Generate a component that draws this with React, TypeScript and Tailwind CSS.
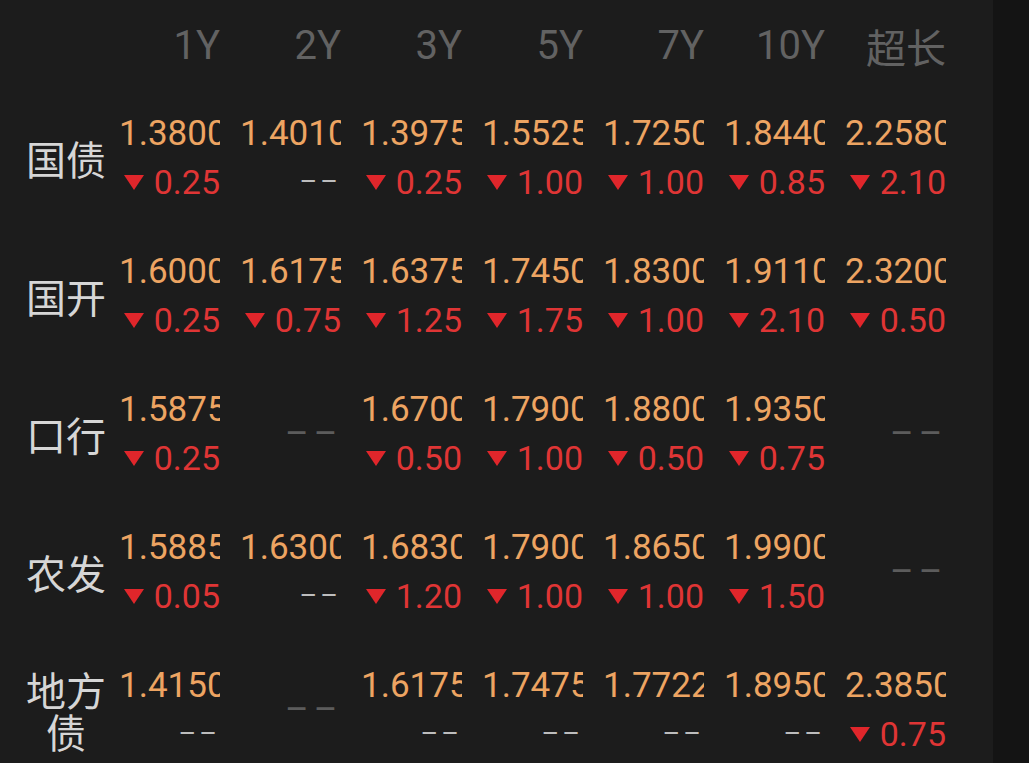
import React from 'react';

type Cell = { v: string; c: string | null } | null;

interface Row {
  name: string;
  cells: Cell[];
}

const HEAD = ['1Y', '2Y', '3Y', '5Y', '7Y', '10Y', '超长'];

const ROWS: Row[] = [
  {
    name: '国债',
    cells: [
      { v: '1.3800', c: '0.25' },
      { v: '1.4010', c: null },
      { v: '1.3975', c: '0.25' },
      { v: '1.5525', c: '1.00' },
      { v: '1.7250', c: '1.00' },
      { v: '1.8440', c: '0.85' },
      { v: '2.2580', c: '2.10' },
    ],
  },
  {
    name: '国开',
    cells: [
      { v: '1.6000', c: '0.25' },
      { v: '1.6175', c: '0.75' },
      { v: '1.6375', c: '1.25' },
      { v: '1.7450', c: '1.75' },
      { v: '1.8300', c: '1.00' },
      { v: '1.9110', c: '2.10' },
      { v: '2.3200', c: '0.50' },
    ],
  },
  {
    name: '口行',
    cells: [
      { v: '1.5875', c: '0.25' },
      null,
      { v: '1.6700', c: '0.50' },
      { v: '1.7900', c: '1.00' },
      { v: '1.8800', c: '0.50' },
      { v: '1.9350', c: '0.75' },
      null,
    ],
  },
  {
    name: '农发',
    cells: [
      { v: '1.5885', c: '0.05' },
      { v: '1.6300', c: null },
      { v: '1.6830', c: '1.20' },
      { v: '1.7900', c: '1.00' },
      { v: '1.8650', c: '1.00' },
      { v: '1.9900', c: '1.50' },
      null,
    ],
  },
  {
    name: '地方债',
    cells: [
      { v: '1.4150', c: null },
      null,
      { v: '1.6175', c: null },
      { v: '1.7475', c: null },
      { v: '1.7722', c: null },
      { v: '1.8950', c: null },
      { v: '2.3850', c: '0.75' },
    ],
  },
];

const num = { fontFamily: 'Roboto, "Noto Sans", sans-serif' };
const cjk = { fontFamily: '"Noto Sans CJK SC", "Noto Sans", sans-serif' };

function Down() {
  return (
    <svg width="20" height="15" viewBox="0 0 20 15" className="shrink-0">
      <path d="M0 0H20L10 15Z" fill="#e0262b" />
    </svg>
  );
}

function RateCell({ cell }: { cell: Cell }) {
  if (!cell) {
    // no quote at all: one dim placeholder across both lines
    return (
      <div className="flex h-[96px] items-center pl-[45px]">
        <span style={num} className="text-[36px] leading-none tracking-[5px] text-[#5c5c5c]">
          ––
        </span>
      </div>
    );
  }
  return (
    <div className="flex h-[96px] flex-col overflow-hidden">
      <div
        style={num}
        className="h-[48px] whitespace-nowrap text-[35px] leading-[48px] text-[#eda462]"
      >
        {cell.v}
      </div>
      <div className="flex h-[48px] items-center justify-end">
        {cell.c ? (
          <>
            <Down />
            <span style={num} className="ml-[10px] text-[34px] leading-[48px] text-[#df3535]">
              {cell.c}
            </span>
          </>
        ) : (
          <span style={num} className="text-[27px] leading-none tracking-[3px] text-[#bdbdbd]">
            ––
          </span>
        )}
      </div>
    </div>
  );
}

export default function App() {
  return (
    <div className="flex h-[763px] w-[1029px] overflow-hidden bg-[#1c1c1c]">
      <div className="flex-1 pl-[24px]">
        <div className="flex h-[89px] items-center pt-[3px]">
          <div className="w-[95px] shrink-0" />
          <div className="grid grid-cols-[repeat(7,101px)] gap-x-[20px]">
            {HEAD.map((h) => (
              <div
                key={h}
                style={h === '超长' ? cjk : num}
                className="text-right text-[40px] leading-[48px] text-[#626262]"
              >
                {h}
              </div>
            ))}
          </div>
        </div>

        {ROWS.map((row) => (
          <div key={row.name} className="flex h-[138px] items-center">
            <div
              style={cjk}
              className="mr-[11px] w-[84px] shrink-0 text-center text-[40px] leading-[42px] text-[#d6d6d6]"
            >
              {row.name}
            </div>
            <div className="grid grid-cols-[repeat(7,101px)] gap-x-[20px]">
              {row.cells.map((cell, i) => (
                <RateCell key={i} cell={cell} />
              ))}
            </div>
          </div>
        ))}
      </div>
      <div className="w-[36px] shrink-0 bg-[#141414]" />
    </div>
  );
}
